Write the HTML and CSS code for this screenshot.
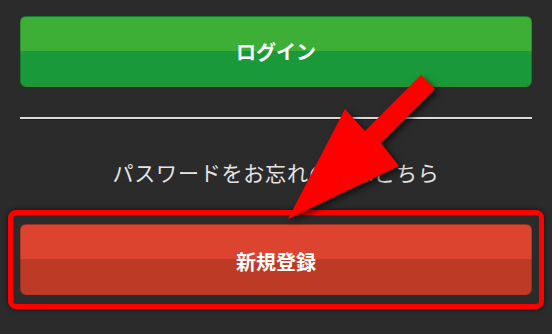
FILE: index.html
```html
<!DOCTYPE html>
<html lang="ja">
<head>
<meta charset="utf-8">
<link rel="stylesheet" href="styles.css">
</head>
<body>
<div class="page">
  <a class="btn btn-green">ログイン</a>
  <div class="divider"></div>
  <p class="forgot">パスワードをお忘れの方はこちら</p>
  <div class="highlight">
    <a class="btn btn-red">新規登録</a>
  </div>
  <svg class="arrow" width="552" height="334" viewBox="0 0 552 334">
    <polygon points="421,75 435,89 381,143 399,166 288,219 345,109 365,131" fill="#ff0000"/>
  </svg>
</div>
</body>
</html>
```

FILE: styles.css
```css
html, body {
  margin: 0;
  padding: 0;
  background: #2b2b2b;
}
body {
  width: 552px;
  height: 334px;
  overflow: hidden;
  font-family: "Noto Sans CJK JP", "Noto Sans", sans-serif;
}
.page {
  position: relative;
  padding: 16px 20px 0;
  display: flex;
  flex-direction: column;
}
.btn {
  display: flex;
  align-items: center;
  justify-content: center;
  height: 71px;
  box-sizing: border-box;
  border-radius: 6px;
  color: #ffffff;
  font-weight: 700;
  font-size: 20px;
  text-decoration: none;
  border: 1px solid rgba(0, 0, 0, 0.18);
}
.btn-green {
  background: linear-gradient(to bottom, #3daf37 0, #3daf37 50%, #1a993a 50%, #1a993a 100%);
}
.btn-red {
  background: linear-gradient(to bottom, #dc4430 0, #dc4430 50%, #bd3b26 50%, #bd3b26 100%);
  padding-top: 4px;
}
.divider {
  margin-top: 30px;
  height: 2px;
  background: #dcdcdc;
  box-shadow: 0 1px 0 #1c1c1c;
}
.forgot {
  margin: 38px 0 0;
  height: 30px;
  line-height: 30px;
  text-align: center;
  color: #e4e4e4;
  font-size: 21px;
  letter-spacing: 0.8px;
}
.highlight {
  margin: 23px -12px 0;
  border: 5px solid #ff0000;
  border-radius: 8px;
  padding: 9px 7px 9px;
  box-shadow: 0 0 5px rgba(0, 0, 0, 0.6);
}
.arrow {
  position: absolute;
  left: 0;
  top: 0;
  filter: drop-shadow(3px 3px 3px rgba(0, 0, 0, 0.6));
}
```
